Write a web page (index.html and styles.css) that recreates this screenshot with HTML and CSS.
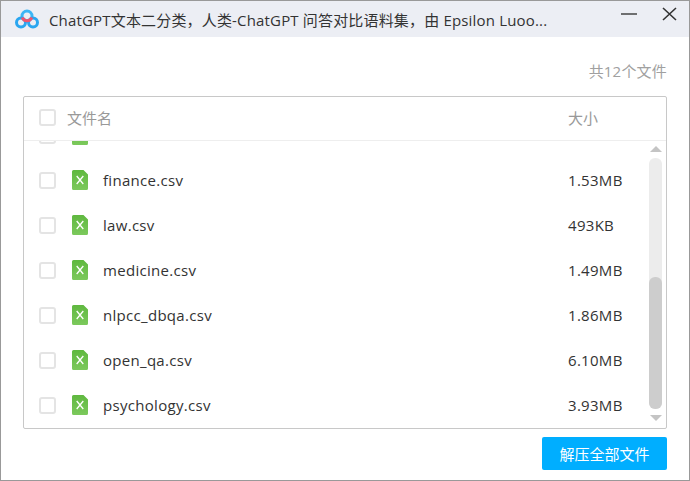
FILE: index.html
```html
<!DOCTYPE html>
<html lang="zh-CN">
<head>
<meta charset="utf-8">
<title>解压全部文件</title>
<link rel="stylesheet" href="styles.css">
</head>
<body>
<svg class="defs" width="0" height="0">
  <defs>
    <linearGradient id="green" x1="0" y1="0" x2="0" y2="1">
      <stop offset="0" stop-color="#5fb83f"/>
      <stop offset="1" stop-color="#7cc95c"/>
    </linearGradient>
    <symbol id="xls" viewBox="0 0 16 20">
      <path d="M1.500 0H11.500l4.500 4.500v14a1.500 1.500 0 0 1-1.500 1.500h-13A1.500 1.500 0 0 1 0 18.500v-17A1.500 1.500 0 0 1 1.500 0z" fill="url(#green)"/>
      <path d="M4.700 6l6.600 8M11.300 6l-6.600 8" stroke="#fff" stroke-width="1.300"/>
    </symbol>
  </defs>
</svg>
<div class="window">
  <header class="titlebar">
    <svg class="logo" viewBox="0 0 24 20" width="24" height="20">
      <circle cx="12" cy="7" r="5" fill="none" stroke="#3cb6f6" stroke-width="3"/>
      <circle cx="6" cy="13.500" r="4.500" fill="none" stroke="#2aa6f0" stroke-width="3"/>
      <circle cx="18" cy="13.500" r="4.500" fill="none" stroke="#2aa6f0" stroke-width="3"/>
      <path d="M7.300 8.500a5 5 0 0 0 9.400 0" fill="none" stroke="#f0566e" stroke-width="3"/>
    </svg>
    <div class="title">ChatGPT文本二分类，人类-ChatGPT 问答对比语料集，由 Epsilon Luoo...</div>
    <div class="controls">
      <svg width="16" height="16" viewBox="0 0 16 16"><path d="M0 7h16" stroke="#444" stroke-width="1.500"/></svg>
      <svg width="16" height="16" viewBox="0 0 16 16"><path d="M2 1l13 12M15 1L2 13" stroke="#333" stroke-width="1.600" fill="none"/></svg>
    </div>
  </header>
  <main class="content">
    <div class="count">共12个文件</div>
    <section class="table">
      <div class="thead">
        <span class="check"></span>
        <span class="th-name">文件名</span>
        <span class="th-size">大小</span>
      </div>
      <div class="tbody">
        <div class="rows">
          <div class="row"><span class="check"></span><svg class="file"><use href="#xls"/></svg></div>
          <div class="row"><span class="check"></span><svg class="file"><use href="#xls"/></svg><span class="name">finance.csv</span><span class="size">1.53MB</span></div>
          <div class="row"><span class="check"></span><svg class="file"><use href="#xls"/></svg><span class="name">law.csv</span><span class="size">493KB</span></div>
          <div class="row"><span class="check"></span><svg class="file"><use href="#xls"/></svg><span class="name">medicine.csv</span><span class="size">1.49MB</span></div>
          <div class="row"><span class="check"></span><svg class="file"><use href="#xls"/></svg><span class="name">nlpcc_dbqa.csv</span><span class="size">1.86MB</span></div>
          <div class="row"><span class="check"></span><svg class="file"><use href="#xls"/></svg><span class="name">open_qa.csv</span><span class="size">6.10MB</span></div>
          <div class="row"><span class="check"></span><svg class="file"><use href="#xls"/></svg><span class="name">psychology.csv</span><span class="size">3.93MB</span></div>
        </div>
        <div class="scrollbar">
          <span class="arrow-up"></span>
          <div class="track"><div class="thumb"></div></div>
          <span class="arrow-down"></span>
        </div>
      </div>
    </section>
    <div class="actions"><button class="extract">解压全部文件</button></div>
  </main>
</div>
</body>
</html>
```

FILE: styles.css
```css
* { box-sizing: border-box; }
html, body { margin: 0; height: 100%; }
body {
  font-family: "Open Sans", "Noto Sans CJK SC", sans-serif;
  font-size: 15px;
  letter-spacing: .17px;
  background: #fff;
  overflow: hidden;
}
.defs { position: absolute; }
.window {
  width: 690px;
  height: 481px;
  border: 1px solid #999;
  display: flex;
  flex-direction: column;
  background: #fff;
}
.titlebar {
  height: 36px;
  flex: none;
  background: #eceef4;
  display: flex;
  align-items: center;
  padding-left: 14px;
}
.logo { flex: none; margin-right: 10px; }
.title { color: #333; white-space: nowrap; }
.controls {
  margin-left: auto;
  display: flex;
  gap: 24px;
  padding-right: 12px;
  align-self: flex-start;
  padding-top: 6px;
}
.content {
  flex: 1;
  display: flex;
  flex-direction: column;
  padding: 0 22px 10px 22px;
  min-height: 0;
}
.count {
  height: 59px;
  flex: none;
  display: flex;
  align-items: center;
  justify-content: flex-end;
  letter-spacing: .2px;
  color: #a0a0a0;
  padding-top: 8px;
}
.table {
  height: 333px;
  flex: none;
  border: 1px solid #c8c8c8;
  border-radius: 2px;
  display: flex;
  flex-direction: column;
}
.thead {
  height: 44px;
  flex: none;
  display: flex;
  align-items: center;
  padding: 0 0 3px 15px;
  border-bottom: 1px solid #eeeeee;
  letter-spacing: 0;
  color: #999;
}
.check {
  width: 17px;
  height: 17px;
  flex: none;
  border: 2px solid #e4e4e4;
  border-radius: 3px;
  background: #fff;
}
.th-name { margin-left: 11px; }
.th-size { margin-left: auto; width: 98px; }
.tbody { flex: 1; display: flex; min-height: 0; overflow: hidden; }
.rows {
  flex: 1;
  display: flex;
  flex-direction: column;
  justify-content: flex-end;
  overflow: hidden;
}
.row {
  height: 45px;
  flex: none;
  display: flex;
  align-items: center;
  padding-left: 15px;
  letter-spacing: .3px;
  color: #333;
}
.file { flex: none; width: 16px; height: 20px; margin: 0 0 2px 16px; }
.name { margin: 0 0 2px 15px; }
.size { margin: 0 0 2px auto; width: 59px; white-space: nowrap; }
.scrollbar {
  width: 39px;
  flex: none;
  display: flex;
  flex-direction: column;
  align-items: center;
  padding: 5px 0 7px 18px;
}
.arrow-up, .arrow-down {
  width: 0;
  height: 0;
  border-left: 6px solid transparent;
  border-right: 6px solid transparent;
}
.arrow-up { border-bottom: 6px solid #c4c4c4; }
.arrow-down { border-top: 6px solid #c4c4c4; }
.track {
  flex: 1;
  width: 13px;
  margin: 6px 0;
  border-radius: 6px;
  background: #ececec;
  display: flex;
  flex-direction: column;
  justify-content: flex-end;
}
.thumb { height: 132px; border-radius: 6px; background: #cdcdcd; }
.actions { display: flex; justify-content: flex-end; margin-top: 8px; }
.extract {
  width: 125px;
  height: 33px;
  border: 0;
  border-radius: 2px;
  background: #00aeff;
  color: #fff;
  font-family: inherit;
  font-size: 15px;
}
```
